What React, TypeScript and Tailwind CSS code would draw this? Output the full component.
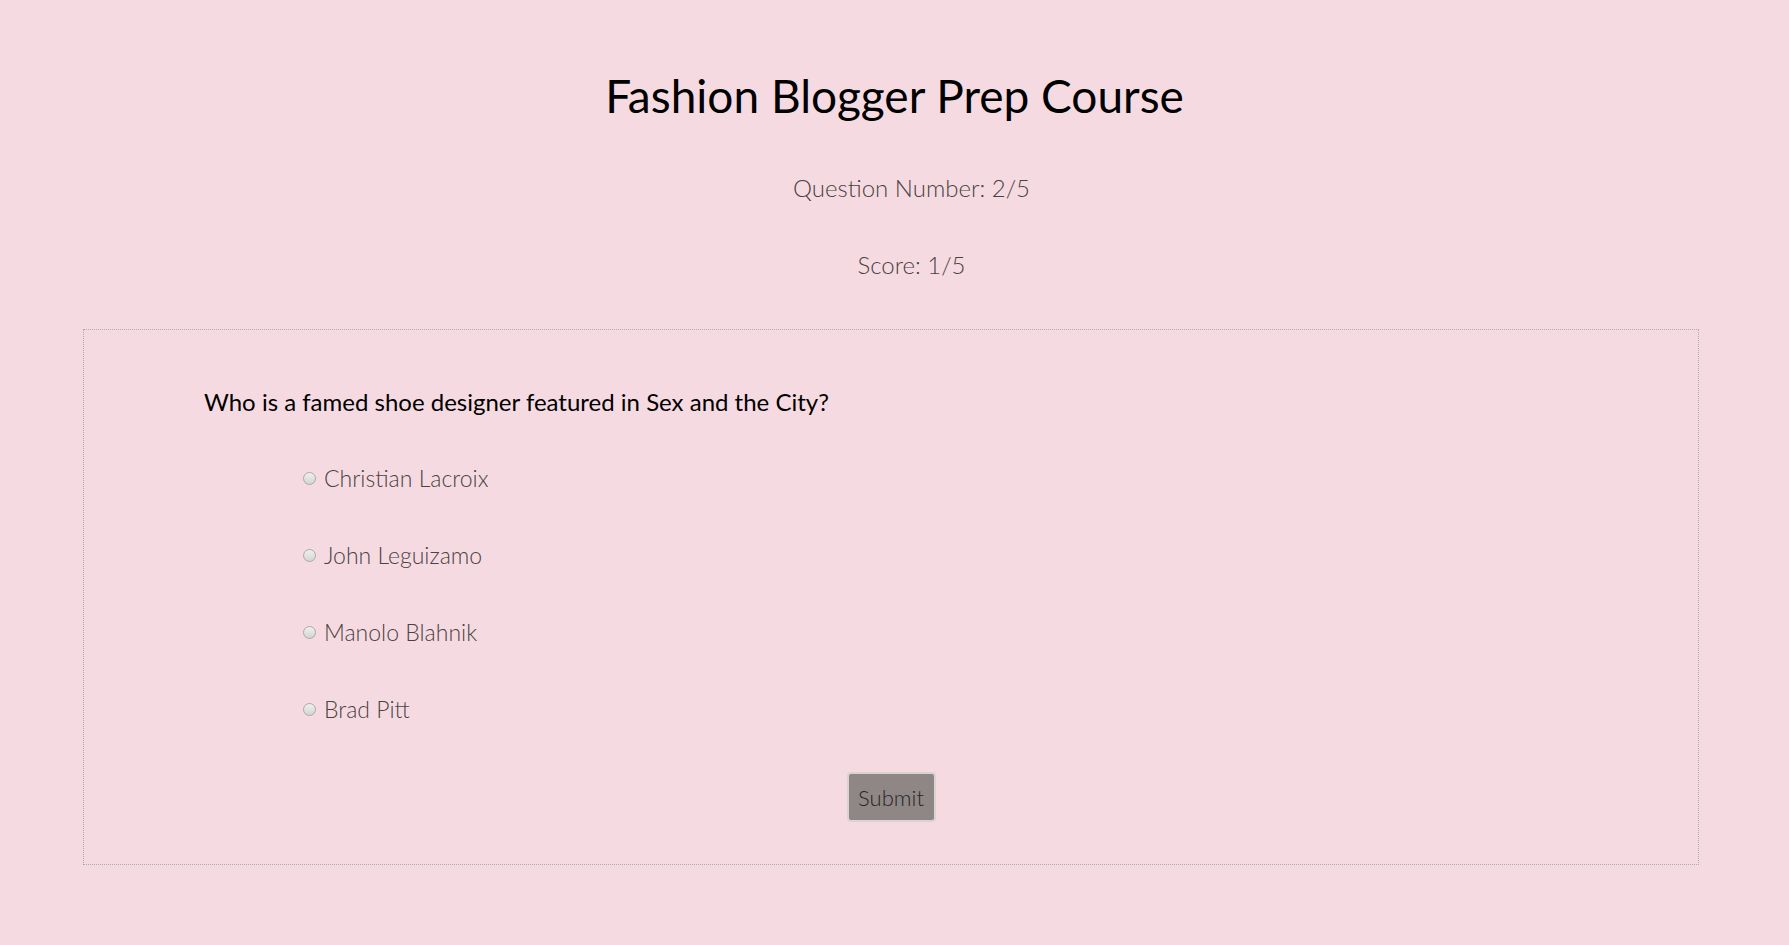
const options = ["Christian Lacroix", "John Leguizamo", "Manolo Blahnik", "Brad Pitt"];

function Radio() {
  return (
    <span className="inline-block w-[13px] h-[13px] rounded-full border border-[#a9a9a9] bg-gradient-to-b from-[#f0f0f0] to-[#d4d4d4] shrink-0" />
  );
}

export default function App() {
  return (
    <div
      className="min-h-[945px] bg-[#f5dbe1] pt-[73px] text-center"
      style={{ fontFamily: "Lato, 'Noto Sans', sans-serif" }}
    >
      <h1 className="text-[46px] leading-none text-black">
        Fashion Blogger Prep Course
      </h1>

      <div className="pl-[34px] font-light text-[#4b4242] text-[24px] leading-none">
        <p className="mt-[57px]">Question Number: 2/5</p>
        <p className="mt-[53px]">Score: 1/5</p>
      </div>

      <div className="ml-[83px] mr-[90px] mt-[52px] h-[536px] border border-dotted border-[#acacac] text-left pt-[60px]">
        <p className="ml-[120px] text-[24px] leading-none text-black">
          Who is a famed shoe designer featured in Sex and the City?
        </p>

        <div className="ml-[219px] mt-[53px] flex flex-col gap-[54px]">
          {options.map((o) => (
            <label key={o} className="flex items-center gap-[8px] text-[23px] leading-none font-light text-[#4b4242]">
              <Radio />
              <span>{o}</span>
            </label>
          ))}
        </div>

        <div className="mt-[51px] flex justify-center">
          <button className="w-[89px] h-[50px] rounded-[4px] border-2 border-[#d9d3d4] bg-[#8e8786] text-[22px] font-light text-[#2a2525]">
            Submit
          </button>
        </div>
      </div>
    </div>
  );
}
